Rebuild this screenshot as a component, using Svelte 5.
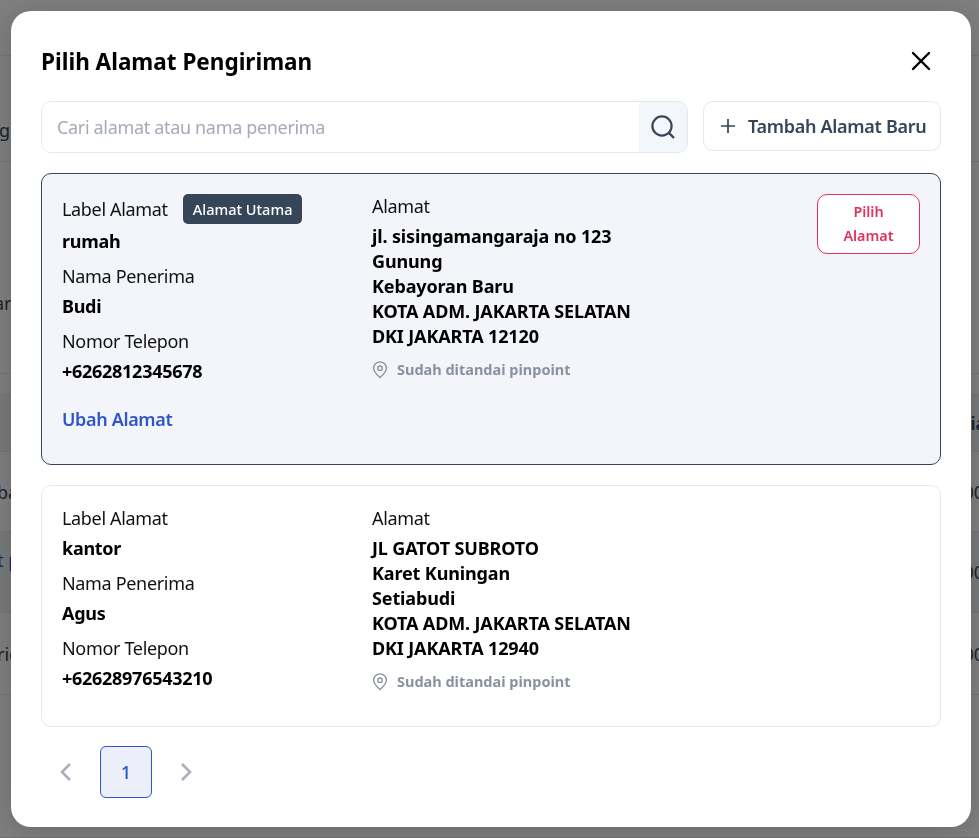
<script>
	const pageRows = [
		{ h: 56 },
		{ h: 106, left: 'g', lx: -1, pad: 42 },
		{ h: 212, left: 'ar', lx: -6, pad: 70 },
		{ h: 21 },
		{ h: 57, right: 'ia', rx: -7, head: true },
		{ h: 80, left: 'ba', lx: -3, right: '00', rx: -5 },
		{ h: 81, left: 't p', lx: -3, right: '00', rx: -5, link: true, alt: true },
		{ h: 82, left: 'rie', lx: -3, right: '00', rx: -5 },
		{ h: 143 }
	];

	const addresses = [
		{
			label: 'rumah',
			main: true,
			name: 'Budi',
			phone: '+6262812345678',
			lines: ['jl. sisingamangaraja no 123', 'Gunung', 'Kebayoran Baru', 'KOTA ADM. JAKARTA SELATAN', 'DKI JAKARTA 12120']
		},
		{
			label: 'kantor',
			main: false,
			name: 'Agus',
			phone: '+62628976543210',
			lines: ['JL GATOT SUBROTO', 'Karet Kuningan', 'Setiabudi', 'KOTA ADM. JAKARTA SELATAN', 'DKI JAKARTA 12940']
		}
	];
</script>

<div class="page">
	{#each pageRows as row}
		<div class="page-row" class:head={row.head} class:alt={row.alt} style="height: {row.h}px; padding-top: {row.pad ?? 0}px">
			<span class:link={row.link} style="margin-left: {row.lx ?? 0}px">{row.left ?? ''}</span>
			<span style="margin-right: {row.rx ?? 0}px">{row.right ?? ''}</span>
		</div>
	{/each}
</div>

<div class="overlay">
	<div class="modal">
		<header>
			<h2>Pilih Alamat Pengiriman</h2>
			<button class="close" aria-label="Tutup">
				<svg width="24" height="24" viewBox="0 0 24 24" fill="none" stroke="#000" stroke-width="2.4" stroke-linecap="round">
					<path d="M4 4l16 16M20 4L4 20" />
				</svg>
			</button>
		</header>

		<div class="tools">
			<div class="search">
				<input type="text" placeholder="Cari alamat atau nama penerima" />
				<span class="search-btn">
					<svg width="28" height="28" viewBox="0 0 28 28" fill="none" stroke="#374559" stroke-width="2.2" stroke-linecap="round">
						<circle cx="13" cy="13" r="9.6" />
						<path d="M20.4 20.4l4 4" />
					</svg>
				</span>
			</div>
			<button class="add">
				<svg width="16" height="16" viewBox="0 0 16 16" fill="none" stroke="#374559" stroke-width="1.7">
					<path d="M1 8h14M8 1v14" />
				</svg>
				Tambah Alamat Baru
			</button>
		</div>

		{#each addresses as a}
			<section class="card" class:main={a.main}>
				<div class="col-left">
					<div class="label-row">
						<span class="k">Label Alamat</span>
						{#if a.main}<span class="badge">Alamat Utama</span>{/if}
					</div>
					<div class="v">{a.label}</div>
					<div class="k gap">Nama Penerima</div>
					<div class="v">{a.name}</div>
					<div class="k gap">Nomor Telepon</div>
					<div class="v">{a.phone}</div>
					{#if a.main}<a class="edit" href="#top">Ubah Alamat</a>{/if}
				</div>
				<div class="col-mid">
					<div class="k">Alamat</div>
					<div class="lines">
						{#each a.lines as line}
							<div class="l">{line}</div>
						{/each}
					</div>
					<div class="pin">
						<svg width="16" height="18" viewBox="0 0 16 18" fill="none" stroke="#8a919e" stroke-width="1.3">
							<path d="M8 16.6C5 13.8 1.6 10.8 1.6 7.2a6.4 6.4 0 0 1 12.8 0c0 3.6-3.4 6.6-6.4 9.4z" />
							<circle cx="8" cy="7.2" r="2.2" />
						</svg>
						Sudah ditandai pinpoint
					</div>
				</div>
				{#if a.main}<button class="pick">Pilih Alamat</button>{/if}
			</section>
		{/each}

		<nav class="pager">
			<svg width="14" height="20" viewBox="0 0 14 20" fill="none" stroke="#a9afbb" stroke-width="2.6">
				<path d="M11 2L3 10l8 8" />
			</svg>
			<span class="current">1</span>
			<svg width="14" height="20" viewBox="0 0 14 20" fill="none" stroke="#a9afbb" stroke-width="2.6">
				<path d="M3 2l8 8-8 8" />
			</svg>
		</nav>
	</div>
</div>

<style>
	:global(body) {
		margin: 0;
		font-family: 'Noto Sans', sans-serif;
		overflow: hidden;
	}

	.page {
		height: 838px;
		background: #fff;
		overflow: hidden;
	}

	.page-row {
		display: flex;
		justify-content: space-between;
		align-items: center;
		box-sizing: border-box;
		border-bottom: 1px solid #e5e7eb;
		font-size: 18px;
		color: #374559;
	}

	.page-row.head {
		background: #f3f4f6;
		font-weight: 600;
	}

	.page-row.alt {
		background: #f3f4f6;
	}

	.page-row .link {
		color: #2a4fc9;
		margin-bottom: 24px;
	}

	.overlay {
		position: fixed;
		inset: 0;
		background: rgba(0, 0, 0, 0.5);
		padding: 11px 8px 11px 11px;
		box-sizing: border-box;
	}

	.modal {
		box-sizing: border-box;
		height: 816px;
		background: #fff;
		border-radius: 20px;
		padding: 30px;
		box-shadow: 0 4px 30px rgba(0, 0, 0, 0.18);
	}

	header {
		display: flex;
		justify-content: space-between;
		align-items: center;
		height: 40px;
		margin-bottom: 20px;
	}

	h2 {
		margin: 0;
		font-size: 22.5px;
		font-weight: 700;
		color: #000;
	}

	.close {
		border: 0;
		background: none;
		padding: 0;
		width: 24px;
		height: 24px;
		margin-right: 8px;
	}

	.tools {
		display: flex;
		gap: 15px;
		margin-bottom: 20px;
	}

	.search {
		flex: 1;
		display: flex;
		height: 52px;
		box-sizing: border-box;
		border: 1px solid #e5e7eb;
		border-radius: 10px;
		overflow: hidden;
	}

	.search input {
		flex: 1;
		min-width: 0;
		border: 0;
		outline: 0;
		padding: 0 15px;
		font: 400 18px 'Noto Sans', sans-serif;
		letter-spacing: -0.33px;
	}

	.search input::placeholder {
		color: #a4abb8;
		opacity: 1;
	}

	.search-btn {
		width: 48px;
		background: #f3f6fa;
		display: flex;
		align-items: center;
		justify-content: center;
	}

	.add {
		display: flex;
		align-items: center;
		gap: 12px;
		height: 50px;
		width: 238px;
		box-sizing: border-box;
		padding: 0 13px 0 16px;
		background: #fff;
		border: 1px solid #e5e7eb;
		border-radius: 10px;
		font: 600 18px 'Noto Sans', sans-serif;
		letter-spacing: -0.3px;
		color: #374559;
		white-space: nowrap;
	}

	.card {
		display: flex;
		box-sizing: border-box;
		height: 242px;
		padding: 20px;
		border: 1px solid #e5e7eb;
		border-radius: 10px;
		margin-bottom: 20px;
		color: #000;
	}

	.card.main {
		height: 292px;
		background: #f3f5fa;
		border-color: #374559;
	}

	.col-left {
		width: 310px;
		flex: none;
	}

	.col-mid {
		flex: 1;
	}

	.k {
		font-size: 18px;
		line-height: 25px;
		letter-spacing: -0.33px;
		color: #111;
	}

	.k.gap {
		margin-top: 10px;
	}

	.v,
	.l {
		font-size: 18px;
		line-height: 25px;
		font-weight: 700;
		color: #000;
	}

	.v {
		margin-top: 5px;
		letter-spacing: -0.28px;
	}

	.l {
		letter-spacing: -0.14px;
	}

	.label-row {
		display: flex;
		align-items: center;
		gap: 15px;
		min-height: 25px;
	}

	.card.main .label-row {
		min-height: 30px;
	}

	.badge {
		background: #374559;
		color: #fff;
		font-size: 14.5px;
		font-weight: 500;
		line-height: 30px;
		padding: 0 10px;
		border-radius: 5px;
	}

	.edit {
		display: block;
		margin-top: 23px;
		font-size: 18px;
		font-weight: 600;
		letter-spacing: -0.35px;
		line-height: 25px;
		color: #2f55c9;
		text-decoration: none;
	}

	.lines {
		margin-top: 5px;
	}

	.pin {
		display: flex;
		align-items: center;
		gap: 9px;
		margin-top: 8px;
		font-size: 14.5px;
		font-weight: 700;
		line-height: 25px;
		color: #8a919e;
	}

	.pick {
		align-self: flex-start;
		width: 103px;
		height: 60px;
		box-sizing: border-box;
		padding: 0 15px;
		background: #fff;
		border: 1px solid #e0305f;
		border-radius: 10px;
		color: #e0305f;
		font: 600 14.4px/24px 'Noto Sans', sans-serif;
	}

	.pager {
		display: flex;
		align-items: center;
		gap: 27px;
		padding-left: 18px;
		margin-top: -1px;
	}

	.current {
		width: 52px;
		height: 52px;
		box-sizing: border-box;
		display: flex;
		align-items: center;
		justify-content: center;
		background: #eceefa;
		border: 1px solid #2f55c9;
		border-radius: 6px;
		color: #2f55c9;
		font-size: 18px;
		font-weight: 500;
	}
</style>
